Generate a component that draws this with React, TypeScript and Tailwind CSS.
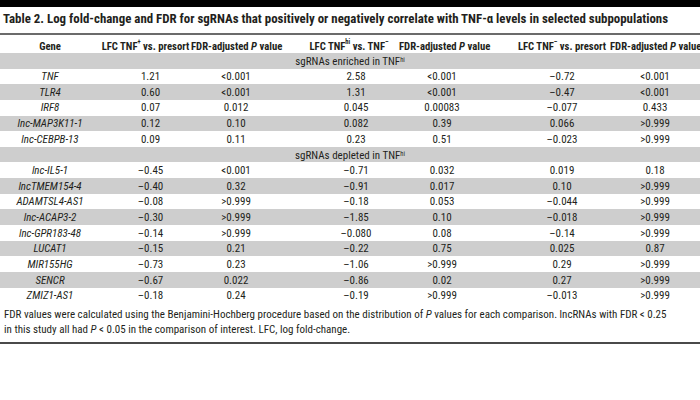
type Row = { gene: string; v: string[] }

const enriched: Row[] = [
  { gene: 'TNF', v: ['1.21', '<0.001', '2.58', '<0.001', '–0.72', '<0.001'] },
  { gene: 'TLR4', v: ['0.60', '<0.001', '1.31', '<0.001', '–0.47', '<0.001'] },
  { gene: 'IRF8', v: ['0.07', '0.012', '0.045', '0.00083', '–0.077', '0.433'] },
  { gene: 'lnc-MAP3K11-1', v: ['0.12', '0.10', '0.082', '0.39', '0.066', '>0.999'] },
  { gene: 'lnc-CEBPB-13', v: ['0.09', '0.11', '0.23', '0.51', '–0.023', '>0.999'] },
]

const depleted: Row[] = [
  { gene: 'lnc-IL5-1', v: ['–0.45', '<0.001', '–0.71', '0.032', '0.019', '0.18'] },
  { gene: 'lncTMEM154-4', v: ['–0.40', '0.32', '–0.91', '0.017', '0.10', '>0.999'] },
  { gene: 'ADAMTSL4-AS1', v: ['–0.08', '>0.999', '–0.18', '0.053', '–0.044', '>0.999'] },
  { gene: 'lnc-ACAP3-2', v: ['–0.30', '>0.999', '–1.85', '0.10', '–0.018', '>0.999'] },
  { gene: 'lnc-GPR183-48', v: ['–0.14', '>0.999', '–0.080', '0.08', '–0.14', '>0.999'] },
  { gene: 'LUCAT1', v: ['–0.15', '0.21', '–0.22', '0.75', '0.025', '0.87'] },
  { gene: 'MIR155HG', v: ['–0.73', '0.23', '–1.06', '>0.999', '0.29', '>0.999'] },
  { gene: 'SENCR', v: ['–0.67', '0.022', '–0.86', '0.02', '0.27', '>0.999'] },
  { gene: 'ZMIZ1-AS1', v: ['–0.18', '0.24', '–0.19', '>0.999', '–0.013', '>0.999'] },
]

// column tracks + left padding so each column centres where the reference has it
const cols = 'grid grid-cols-[100px_91px_90px_114px_90px_125px_90px]'
const headPad = ['', '', '', 'pl-[22px]', 'pl-[4px]', 'pl-[29px]', '']
const dataPad = ['', 'pl-[10px]', '', 'pl-[36px]', 'pl-[4px]', 'pl-[29px]', '']

function Sup({ children }: { children: React.ReactNode }) {
  return <sup className="relative top-[-1px] align-super text-[6.5px] leading-none">{children}</sup>
}

function Section({ label }: { label: string }) {
  return (
    <div className="flex h-[15.65px] items-center justify-center bg-[#cecece] pt-px leading-[15px]">
      {label} in TNF<Sup>hi</Sup>
    </div>
  )
}

function DataRow({ row, gray }: { row: Row; gray: boolean }) {
  return (
    <div
      className={`${cols} h-[15.65px] items-center pt-[1.5px] leading-[14px] ${gray ? 'bg-[#cecece]' : 'bg-white'}`}
    >
      <div className="text-center italic">{row.gene}</div>
      {row.v.map((x, i) => (
        <div key={i} className={`text-center ${dataPad[i + 1]}`}>
          {x}
        </div>
      ))}
    </div>
  )
}

export default function App() {
  return (
    <div className="h-[400px] w-[700px] overflow-hidden bg-white font-['Roboto_Condensed',sans-serif] text-[11px] text-[#231f20]">
      <div className="h-[7px] bg-black" />
      <h1 className="mb-[3px] whitespace-nowrap pl-[3px] text-[12.9px] font-bold leading-[23px]">
        Table 2. Log fold-change and FDR for sgRNAs that positively or negatively correlate with TNF-α levels in
        selected subpopulations
      </h1>
      <div className="h-[2px] bg-[#6b6b6b]" />

      <div className={`${cols} h-[18px] items-end whitespace-nowrap text-[10.7px] font-bold leading-[12px]`}>
        <div className="text-center">Gene</div>
        <div className="text-center">
          LFC TNF<Sup>+</Sup> vs. presort
        </div>
        <div className="text-center">
          FDR-adjusted <span className="italic">P</span> value
        </div>
        <div className={`text-center ${headPad[3]}`}>
          LFC TNF<Sup>hi</Sup> vs. TNF<Sup>–</Sup>
        </div>
        <div className={`text-center ${headPad[4]}`}>
          FDR-adjusted <span className="italic">P</span> value
        </div>
        <div className={`text-center ${headPad[5]}`}>
          LFC TNF<Sup>–</Sup> vs. presort
        </div>
        <div className="text-center">
          FDR-adjusted <span className="italic">P</span> value
        </div>
      </div>

      <Section label="sgRNAs enriched" />
      {enriched.map((r, i) => (
        <DataRow key={r.gene} row={r} gray={i % 2 === 1} />
      ))}
      <Section label="sgRNAs depleted" />
      {depleted.map((r, i) => (
        <DataRow key={r.gene} row={r} gray={i % 2 === 1} />
      ))}

      <p className="whitespace-nowrap pl-[4px] pt-[4px] leading-[15px]">
        FDR values were calculated using the Benjamini-Hochberg procedure based on the distribution of{' '}
        <span className="italic">P</span> values for each comparison. lncRNAs with FDR &lt; 0.25
        <br />
        in this study all had <span className="italic">P</span> &lt; 0.05 in the comparison of interest. LFC, log
        fold-change.
      </p>
      <div className="mt-[5px] h-[2px] bg-[#4a4a4a]" />
    </div>
  )
}
